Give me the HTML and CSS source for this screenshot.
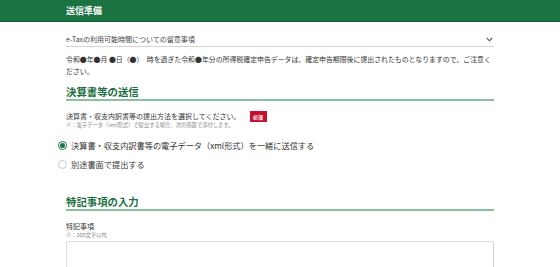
FILE: index.html
```html
<!DOCTYPE html>
<html lang="ja">
<head>
<meta charset="utf-8">
<title>送信準備</title>
<link rel="stylesheet" href="styles.css">
</head>
<body>
<header class="topbar"><h1 class="topbar-title">送信準備</h1></header>
<main class="content">
  <div class="accordion">
    <span class="accordion-label">e-Taxの利用可能時間についての留意事項</span>
    <svg class="chevron" width="7" height="5" viewBox="0 0 7 5"><polyline points="0.8,1 3.5,3.8 6.2,1" fill="none" stroke="#555" stroke-width="1.1"/></svg>
  </div>
  <p class="notice">令和●年●月 ●日（●）　時を過ぎた令和●年分の所得税確定申告データは、確定申告期限後に提出されたものとなりますので、ご注意ください。</p>

  <h2 class="section-title">決算書等の送信</h2>
  <div class="field-label">決算書・収支内訳書等の提出方法を選択してください。<span class="badge">必須</span></div>
  <div class="field-note">※：電子データ（xml形式）で提出する場合、次の画面で添付します。</div>
  <div class="radio-group">
    <label class="radio checked"><span class="radio-mark"></span>決算書・収支内訳書等の電子データ（xml形式）を一緒に送信する</label>
    <label class="radio"><span class="radio-mark"></span>別途書面で提出する</label>
  </div>

  <h2 class="section-title second">特記事項の入力</h2>
  <div class="field-label plain">特記事項</div>
  <div class="field-note">※：200文字以内</div>
  <div class="textarea"></div>
</main>
</body>
</html>
```
FILE: styles.css
```css
* { box-sizing: border-box; }
html, body { overflow: hidden; }
body {
  margin: 0;
  background: #fff;
  font-family: "Noto Sans CJK JP", "Noto Sans", sans-serif;
  color: #333;
}
.topbar {
  height: 22px;
  background: #1b7342;
  border-bottom: 1px solid #155c34;
  padding-left: 66px;
}
.topbar-title {
  margin: 0;
  color: #fff;
  font-size: 9px;
  font-weight: bold;
  line-height: 21px;
}
.content {
  margin-left: 66px;
  width: 428px;
}
.accordion {
  margin-top: 10px;
  height: 14px;
  display: flex;
  align-items: center;
  justify-content: space-between;
  border-bottom: 1px solid #d9d4c9;
  box-sizing: content-box;
}
.accordion-label {
  font-size: 7px;
  color: #444;
}
.chevron { margin-right: 1px; }
.notice {
  margin: 6px 0 0;
  font-size: 6.9px;
  line-height: 12px;
  color: #333;
}
.section-title {
  margin: 8px 0 0;
  font-size: 10.4px;
  line-height: 14px;
  font-weight: bold;
  color: #1b6f40;
  border-bottom: 2px solid #86bfa1;
}
.section-title.second { margin-top: 24px; }
.field-label {
  margin-top: 10px;
  font-size: 7px;
  line-height: 11px;
  display: flex;
  align-items: center;
}
.field-label.plain { margin-top: 10px; }
.badge {
  margin-left: 9px;
  width: 17px;
  height: 11px;
  background: #c8102e;
  color: #fff;
  font-size: 5px;
  line-height: 11px;
  text-align: center;
  font-weight: bold;
}
.field-note {
  font-size: 5.3px;
  line-height: 7px;
  color: #888;
}
.radio-group {
  margin-top: 9px;
  margin-left: -8px;
  display: flex;
  flex-direction: column;
  gap: 5px;
}
.radio {
  display: flex;
  align-items: center;
  height: 14px;
  font-size: 8.2px;
  color: #333;
}
.radio-mark {
  width: 9px;
  height: 9px;
  border: 1px solid #c9c9c9;
  border-radius: 50%;
  margin-right: 4px;
  display: flex;
  align-items: center;
  justify-content: center;
}
.radio.checked .radio-mark { border-color: #1b7342; }
.radio.checked .radio-mark::after {
  content: "";
  width: 5px;
  height: 5px;
  border-radius: 50%;
  background: #1b7342;
}
.textarea {
  margin-top: 2px;
  height: 60px;
  border: 1px solid #e2ddd3;
  border-right-color: #d6d1c6;
  border-radius: 2px;
}
```
